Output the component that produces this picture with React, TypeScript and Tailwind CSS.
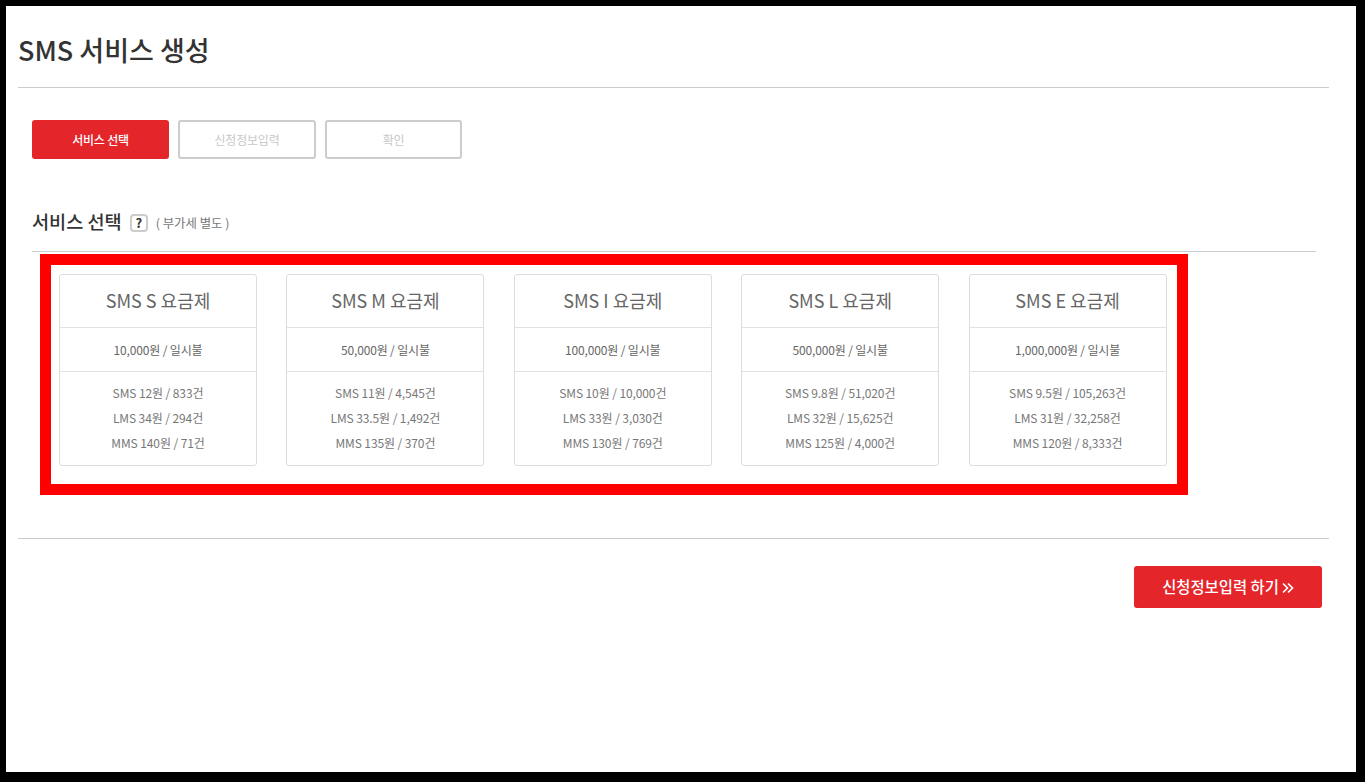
const font = { fontFamily: '"Noto Sans CJK KR", sans-serif' };

const plans = [
  { name: "SMS S 요금제", price: "10,000원 / 일시불", rows: ["SMS 12원 / 833건", "LMS 34원 / 294건", "MMS 140원 / 71건"] },
  { name: "SMS M 요금제", price: "50,000원 / 일시불", rows: ["SMS 11원 / 4,545건", "LMS 33.5원 / 1,492건", "MMS 135원 / 370건"] },
  { name: "SMS I 요금제", price: "100,000원 / 일시불", rows: ["SMS 10원 / 10,000건", "LMS 33원 / 3,030건", "MMS 130원 / 769건"] },
  { name: "SMS L 요금제", price: "500,000원 / 일시불", rows: ["SMS 9.8원 / 51,020건", "LMS 32원 / 15,625건", "MMS 125원 / 4,000건"] },
  { name: "SMS E 요금제", price: "1,000,000원 / 일시불", rows: ["SMS 9.5원 / 105,263건", "LMS 31원 / 32,258건", "MMS 120원 / 8,333건"] },
];

function PlanCard({ plan }: { plan: (typeof plans)[number] }) {
  return (
    <div className="h-[192px] rounded-[3px] border border-[#dddddd] bg-white text-center">
      <div className="flex h-[53px] items-center justify-center border-b border-[#e2e2e2] pb-[2px] text-[18px] text-[#666666]">{plan.name}</div>
      <div className="flex h-[44px] items-center justify-center border-b border-[#e2e2e2] text-[12px] tracking-[-0.15px] text-[#666666]">{plan.price}</div>
      <div className="pt-[8px] text-[12px] leading-[25px] tracking-[-0.1px] text-[#777777]">
        {plan.rows.map((row) => (
          <p key={row}>{row}</p>
        ))}
      </div>
    </div>
  );
}

export default function App() {
  return (
    <div
      className="h-[782px] w-[1365px] overflow-hidden border-t-[6px] border-r-[9px] border-b-[10px] border-l-[6px] border-black bg-white"
      style={font}
    >
      <div className="pr-[27px] pl-3">
        {/* 제목 */}
        <h1 className="flex h-[82px] items-center border-b border-[#cccccc] pt-[7px] text-[27px] font-medium text-[#333333]">
          SMS 서비스 생성
        </h1>

        <div className="pr-[13px] pl-[14px]">
          {/* 단계 */}
          <div className="mt-[32px] flex gap-[9px] text-[12px] tracking-[-0.2px]">
            <div className="flex h-[39px] w-[137px] items-center justify-center rounded-[3px] bg-[#e4262b] font-medium text-white">
              서비스 선택
            </div>
            <div className="flex h-[39px] w-[138px] items-center justify-center rounded-[3px] border-2 border-[#cccccc] text-[#c8c8c8]">
              신청정보입력
            </div>
            <div className="flex h-[39px] w-[137px] items-center justify-center rounded-[3px] border-2 border-[#cccccc] text-[#c8c8c8]">
              확인
            </div>
          </div>

          {/* 서비스 선택 */}
          <div className="mt-[46px] flex h-[47px] items-start border-b border-[#cccccc]">
            <h2 className="text-[18.6px] leading-[32px] font-medium text-[#333333]">서비스 선택</h2>
            <span className="mt-[9px] ml-[8px] flex h-[18px] w-[18px] items-center justify-center rounded-[4px] border-2 border-[#cccccc] text-[13px] font-bold text-[#333333]">
              ?
            </span>
            <span className="mt-[8px] ml-[8px] text-[12.4px] leading-[20px] text-[#777777]">( 부가세 별도 )</span>
          </div>

          {/* 요금제 목록 */}
          <div className="mt-[2px] ml-[8px] h-[241px] w-[1148px] border-[11px] border-[#ff0000] pt-[9px] pl-[8px]">
            <div className="grid grid-cols-[repeat(5,198px)] gap-x-[29.4px]">
              {plans.map((plan) => (
                <PlanCard key={plan.name} plan={plan} />
              ))}
            </div>
          </div>
        </div>

        {/* 하단 버튼 */}
        <div className="mt-[43px] border-t border-[#cccccc] pt-[27px] pr-[7px]">
          <div className="flex justify-end">
            <button className="flex h-[42px] w-[188px] items-center justify-center rounded-[3px] bg-[#e4262b] text-[15.4px] font-medium text-white">
              신청정보입력 하기
              <svg className="mt-[2px] ml-[3px]" width="12" height="12" viewBox="0 0 12 12" fill="none" stroke="white" strokeWidth="1.7">
                <path d="M1 1.5 5.5 6 1 10.5M6 1.5 10.5 6 6 10.5" />
              </svg>
            </button>
          </div>
        </div>
      </div>
    </div>
  );
}
